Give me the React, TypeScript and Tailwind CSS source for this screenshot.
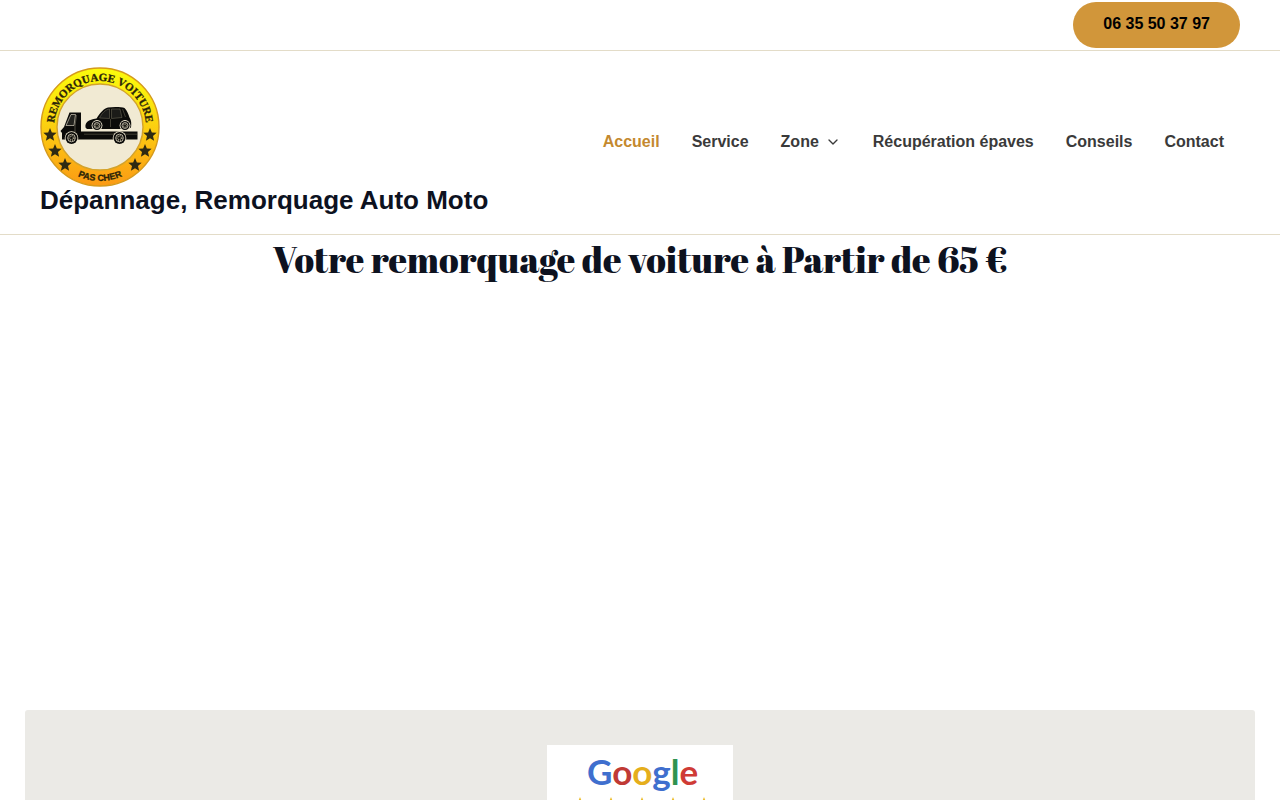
import { ChevronDown } from "lucide-react";

const NAV_ITEMS = [
  { label: "Accueil", href: "#accueil", active: true },
  { label: "Service", href: "#service" },
  { label: "Zone", href: "#zone", hasMenu: true },
  { label: "Récupération épaves", href: "#epaves" },
  { label: "Conseils", href: "#conseils" },
  { label: "Contact", href: "#contact" },
];

const BADGE_STARS = [
  { x: 10, y: 68, r: 7 },
  { x: 15, y: 84, r: 7 },
  { x: 25, y: 98, r: 7 },
  { x: 95, y: 98, r: 7 },
  { x: 105, y: 84, r: 7 },
  { x: 110, y: 68, r: 7 },
];

function starPoints(cx: number, cy: number, r: number) {
  return Array.from({ length: 10 }, (_, i) => {
    const radius = i % 2 === 0 ? r : r * 0.45;
    const angle = (Math.PI / 5) * i - Math.PI / 2;
    return `${cx + radius * Math.cos(angle)},${cy + radius * Math.sin(angle)}`;
  }).join(" ");
}

function Wheel({ cx, cy, r }: { cx: number; cy: number; r: number }) {
  return (
    <g>
      <circle cx={cx} cy={cy} r={r + 0.8} fill="#f1ead3" />
      <circle cx={cx} cy={cy} r={r} fill="#0b0b09" />
      <circle cx={cx} cy={cy} r={r * 0.64} fill="none" stroke="#d9d3bf" strokeWidth="0.8" />
      <circle
        cx={cx}
        cy={cy}
        r={r * 0.35}
        fill="none"
        stroke="#a8a28c"
        strokeWidth={r * 0.35}
        strokeDasharray="0.8 1"
      />
    </g>
  );
}

function BadgeLogo() {
  return (
    <svg
      viewBox="0 0 120 120"
      className="block size-[120px]"
      role="img"
      aria-label="Remorquage Voiture Pas Cher"
    >
      <defs>
        <linearGradient id="ring" x1="0" y1="0" x2="0" y2="1">
          <stop offset="0" stopColor="#fbfb0c" />
          <stop offset="0.3" stopColor="#fbe40e" />
          <stop offset="0.65" stopColor="#fcbf12" />
          <stop offset="1" stopColor="#fb9a14" />
        </linearGradient>
        <path id="arc-top" d="M14 60 A46 46 0 0 1 106 60" />
        <path id="arc-bottom" d="M6 60 A54 54 0 0 0 114 60" />
      </defs>
      <circle cx="60" cy="60" r="59" fill="url(#ring)" stroke="#d59a1c" strokeWidth="1.4" />
      <circle cx="60" cy="60" r="43" fill="#f1ead3" stroke="#d3a32c" strokeWidth="1.4" />

      <g fill="#2b2408" stroke="#2b2408" strokeWidth="0.3" fontWeight="700">
        <text fontSize="11" textAnchor="middle" fontFamily="'Liberation Serif', serif">
          <textPath href="#arc-top" startOffset="50%">
            REMORQUAGE VOITURE
          </textPath>
        </text>
        <text fontSize="9" textAnchor="middle" fontFamily="'Liberation Sans', sans-serif">
          <textPath href="#arc-bottom" startOffset="50%">
            PAS CHER
          </textPath>
        </text>
      </g>

      {BADGE_STARS.map((s) => (
        <polygon key={`${s.x}-${s.y}`} points={starPoints(s.x, s.y, s.r)} fill="#2e2a12" />
      ))}

      {/* tow truck */}
      <path d="M29.5 45.5 H41 V64.5 H97.5 V72.5 H22 V66 L20.5 64 L24 60 Z" fill="#0b0b09" />
      <path d="M31 47.5 H35.5 L34 58.5 H26 Z" fill="#22221e" stroke="#f1ead3" strokeWidth="0.6" />
      <path d="M36.5 48 L35 59 V70" fill="none" stroke="#8d8876" strokeWidth="0.5" />
      <path d="M44 67.2 H97 M81 65.5 V71.5" stroke="#77735f" strokeWidth="0.5" />
      <Wheel cx={31.5} cy={71} r={6} />
      <Wheel cx={79.5} cy={71} r={6} />

      {/* car on the bed */}
      <path
        d="M45.5 60.5 C45 55 48 53 56.5 51.5 C60 46 64 41 68 40.5 C74 39.5 82 40 84.5 41 C87 43.5 88.5 47.5 89.5 50.5 C91.5 53 91.5 57 91 60.5 L88 62 H47 Z"
        fill="#0b0b09"
      />
      <path
        d="M59.5 51 C62 46 65.5 42.5 69.5 42 V51.5 Z M71.5 42 H80 L82 50.5 L71.5 51.5 Z"
        fill="#1b1b18"
        stroke="#77735f"
        strokeWidth="0.5"
      />
      <path d="M70.5 52 V60 M82.5 42 L85.5 50" stroke="#77735f" strokeWidth="0.5" />
      <Wheel cx={57} cy={58.5} r={4.6} />
      <Wheel cx={85} cy={58.5} r={4.6} />
    </svg>
  );
}

function GoogleCard() {
  return (
    <div className="w-[186px] bg-white">
      <svg viewBox="0 0 186 82" className="block w-full" role="img" aria-label="Google, 5 étoiles">
        <text x="40" y="40" fontSize="35" fontFamily="Lato, sans-serif" fontWeight="700">
          <tspan fill="#3f6fce">G</tspan>
          <tspan fill="#c03a35">o</tspan>
          <tspan fill="#e5ae1c">o</tspan>
          <tspan fill="#3f6fce">g</tspan>
          <tspan fill="#2f9350">l</tspan>
          <tspan fill="#cf3b36">e</tspan>
        </text>
        {[33, 64, 95, 126, 157].map((x) => (
          <polygon key={x} points={starPoints(x, 66, 14)} fill="#edbd2c" />
        ))}
      </svg>
    </div>
  );
}

export default function App() {
  return (
    <div className="min-h-screen bg-white font-['Liberation_Sans',Arial,sans-serif] text-[#0d121f]">
      <div className="flex justify-end border-b border-[#e3dcc8] px-10 py-0.5">
        <a
          href="tel:0635503797"
          className="rounded-full bg-[#d1963a] px-[30px] pt-[13px] pb-[15px] text-base leading-[18px] font-bold text-black"
        >
          06 35 50 37 97
        </a>
      </div>

      <header className="flex items-center justify-between border-b border-[#e3dcc8] px-10 py-4">
        <a href="#accueil" className="block">
          <BadgeLogo />
          <span className="block pb-[5px] text-[26px] leading-[26px] font-bold">
            Dépannage, Remorquage Auto Moto
          </span>
        </a>
        <nav className="flex pb-0.5 text-base font-bold text-[#3a3a3a]">
          {NAV_ITEMS.map((item) => (
            <a
              key={item.label}
              href={item.href}
              className={
                item.active
                  ? "flex items-center px-4 text-[#c4892f]"
                  : "flex items-center px-4"
              }
            >
              {item.label}
              {item.hasMenu && <ChevronDown className="ml-1.5 size-4" strokeWidth={2} />}
            </a>
          ))}
        </nav>
      </header>

      <main>
        <section className="h-[475px]">
          <h1 className="text-center font-['Abril_Fatface','Liberation_Serif',serif] text-4xl leading-12 font-normal">
            Votre remorquage de voiture à Partir de 65 €
          </h1>
        </section>
        <section className="mx-[25px] flex justify-center rounded-[3px] bg-[#ebeae6] py-[35px]">
          <GoogleCard />
        </section>
      </main>
    </div>
  );
}
